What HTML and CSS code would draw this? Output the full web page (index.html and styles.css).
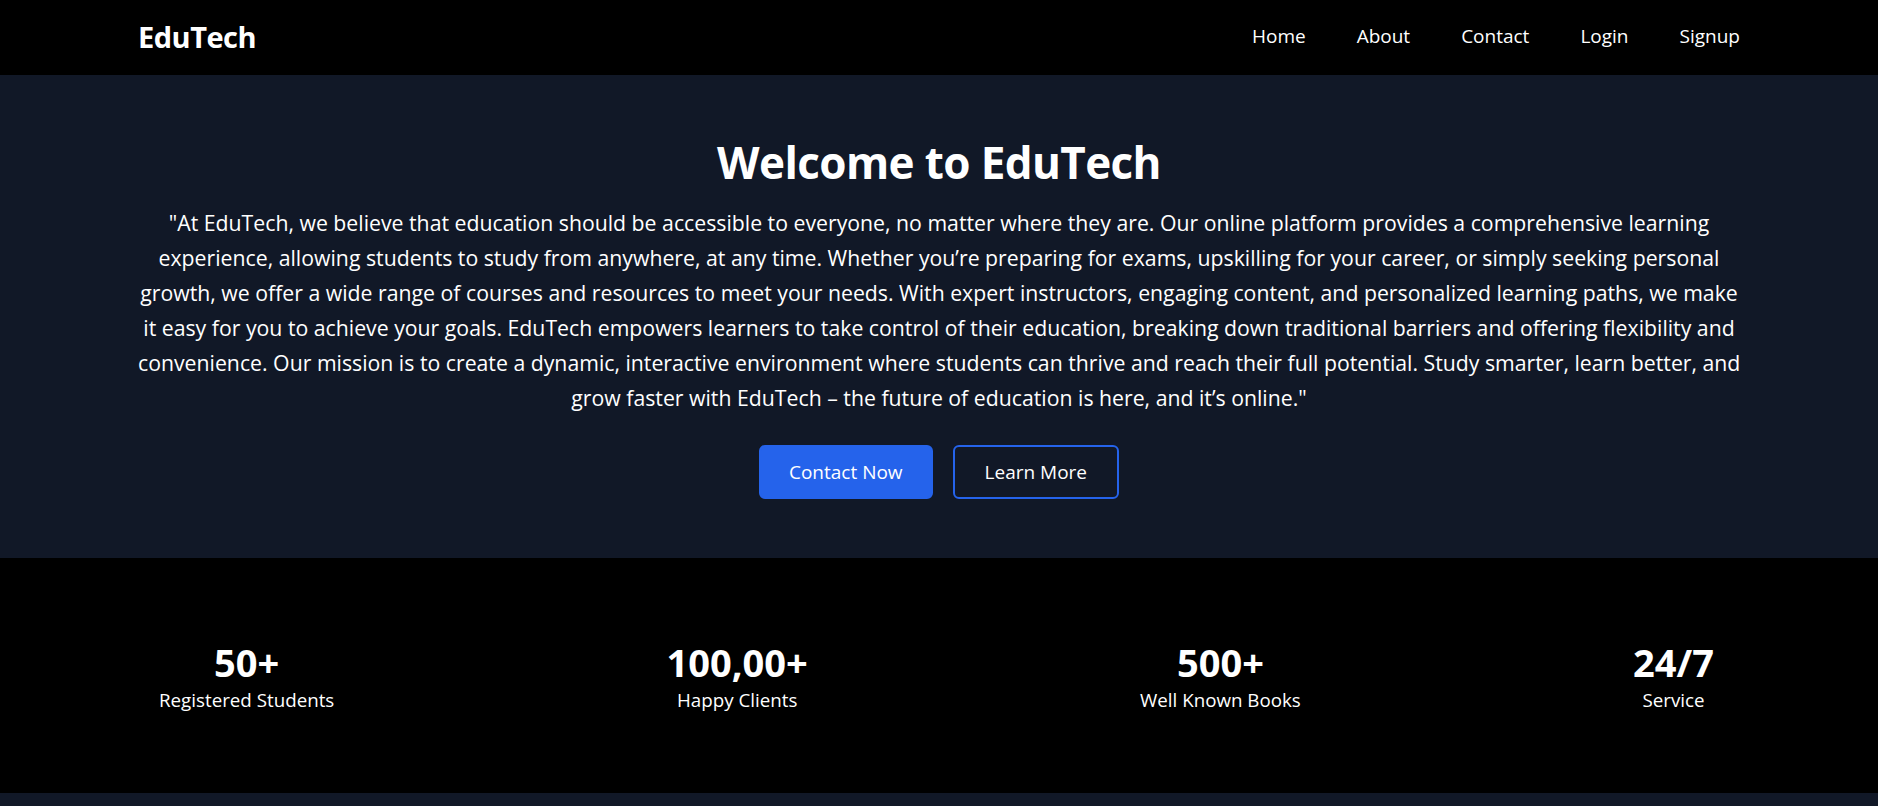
FILE: index.html
```html
<!DOCTYPE html>
<html lang="en">
<head>
<meta charset="utf-8">
<title>EduTech</title>
<link rel="stylesheet" href="styles.css">
</head>
<body>
<header class="nav">
  <div class="container nav-inner">
    <a class="logo" href="#">EduTech</a>
    <nav class="links">
      <a href="#">Home</a>
      <a href="#">About</a>
      <a href="#">Contact</a>
      <a href="#">Login</a>
      <a href="#">Signup</a>
    </nav>
  </div>
</header>

<section class="hero">
  <div class="container">
    <h1 class="hero-title">Welcome to EduTech</h1>
    <p class="hero-text">
      <span class="line">"At EduTech, we believe that education should be accessible to everyone, no matter where they are. Our online platform provides a comprehensive learning</span>
      <span class="line">experience, allowing students to study from anywhere, at any time. Whether you’re preparing for exams, upskilling for your career, or simply seeking personal</span>
      <span class="line">growth, we offer a wide range of courses and resources to meet your needs. With expert instructors, engaging content, and personalized learning paths, we make</span>
      <span class="line">it easy for you to achieve your goals. EduTech empowers learners to take control of their education, breaking down traditional barriers and offering flexibility and</span>
      <span class="line">convenience. Our mission is to create a dynamic, interactive environment where students can thrive and reach their full potential. Study smarter, learn better, and</span>
      <span class="line">grow faster with EduTech – the future of education is here, and it’s online."</span>
    </p>
    <div class="actions">
      <a class="btn btn-primary" href="#">Contact Now</a>
      <a class="btn btn-outline" href="#">Learn More</a>
    </div>
  </div>
</section>

<section class="stats">
  <div class="stats-inner">
    <div class="stat">
      <div class="stat-num">50+</div>
      <div class="stat-label">Registered Students</div>
    </div>
    <div class="stat">
      <div class="stat-num">100,00+</div>
      <div class="stat-label">Happy Clients</div>
    </div>
    <div class="stat">
      <div class="stat-num">500+</div>
      <div class="stat-label">Well Known Books</div>
    </div>
    <div class="stat">
      <div class="stat-num">24/7</div>
      <div class="stat-label">Service</div>
    </div>
  </div>
</section>

<section class="after"></section>
</body>
</html>
```

FILE: styles.css
```css
* { box-sizing: border-box; }

body {
  margin: 0;
  background: #000;
  color: #fff;
  font-family: "Open Sans", "Noto Sans", sans-serif;
}

a { color: inherit; text-decoration: none; }

.container {
  max-width: 1602px;
  margin: 0 auto;
}

.nav {
  background: #000;
  height: 75px;
}

.nav-inner {
  height: 100%;
  padding-bottom: 2px;
  display: flex;
  align-items: center;
  justify-content: space-between;
}

.logo {
  font-size: 29px;
  font-weight: 700;
  line-height: 1;
  letter-spacing: -0.5px;
}

.links {
  display: flex;
  gap: 51px;
  font-size: 19px;
  line-height: 1;
}

.hero {
  background: #111827;
  padding: 63px 0 59px;
  text-align: center;
}

.hero-title {
  margin: 0;
  font-size: 44px;
  line-height: 48px;
  font-weight: 700;
  letter-spacing: -0.6px;
}

.hero-text {
  margin: 19px 0 0;
  font-size: 21.25px;
  line-height: 35px;
}

.line {
  display: block;
  white-space: nowrap;
}

.actions {
  margin-top: 30px;
  display: flex;
  justify-content: center;
  gap: 20px;
}

.btn {
  display: inline-flex;
  align-items: center;
  justify-content: center;
  height: 54px;
  padding: 0 28px;
  border: 2px solid transparent;
  border-radius: 6px;
  font-size: 19px;
}

.btn-primary {
  background: #2563eb;
  border-color: #2563eb;
}

.btn-outline {
  padding: 0 30px;
  border-color: #2563eb;
}

.stats {
  background: #000;
  padding: 84px 0 79px;
}

.stats-inner {
  max-width: 1560px;
  margin: 0 auto;
  padding-right: 5px;
  display: flex;
  justify-content: space-between;
}

.stat {
  text-align: center;
}

.stat-num {
  font-size: 38px;
  line-height: 40px;
  font-weight: 700;
}

.stat-label {
  margin-top: 4px;
  font-size: 18.75px;
  line-height: 28px;
}

.after {
  background: #111827;
  height: 200px;
}
```
